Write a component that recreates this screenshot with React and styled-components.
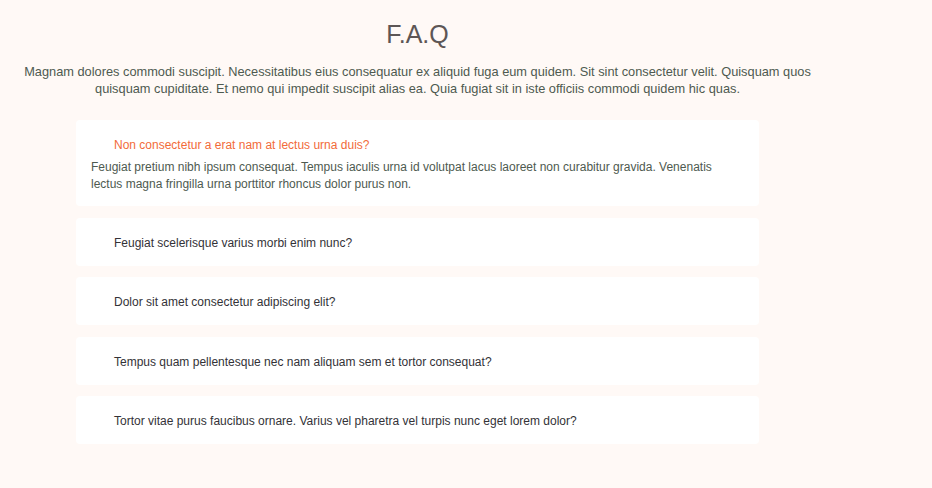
import React, { useState } from 'react';
import styled, { createGlobalStyle } from 'styled-components';

const GlobalStyle = createGlobalStyle`
  html, body {
    margin: 0;
    padding: 0;
    background: #fff9f6;
  }
  body {
    font-family: "Liberation Sans", Arial, sans-serif;
  }
`;

const Section = styled.section`
  width: 835px;
  padding-top: 18px;
  text-align: center;
`;

const Title = styled.h2`
  margin: 0;
  font-size: 25px;
  font-weight: 400;
  line-height: 32px;
  color: #5d5655;
`;

const Intro = styled.p`
  margin: 13px 0 0;
  padding: 0 20px;
  font-size: 12.8px;
  line-height: 17px;
  color: #4e5a50;
`;

const List = styled.ul`
  list-style: none;
  margin: 23px 76px 0;
  padding: 0;
  display: flex;
  flex-direction: column;
  gap: 11.5px;
  text-align: left;
`;

const Item = styled.li`
  background: #fff;
  border-radius: 4px;
  padding: 16px 15px 14px;
`;

const Question = styled.a`
  display: block;
  padding-left: 23px;
  font-size: 12px;
  line-height: 18px;
  color: ${p => (p.$open ? '#f26b3a' : '#333237')};
  cursor: pointer;
  text-decoration: none;
`;

const Answer = styled.p`
  margin: 5px 0 -1px;
  font-size: 12px;
  line-height: 17px;
  color: #4e5a50;
`;

const faqs = [
  {
    q: 'Non consectetur a erat nam at lectus urna duis?',
    a: 'Feugiat pretium nibh ipsum consequat. Tempus iaculis urna id volutpat lacus laoreet non curabitur gravida. Venenatis lectus magna fringilla urna porttitor rhoncus dolor purus non.',
  },
  {
    q: 'Feugiat scelerisque varius morbi enim nunc?',
    a: 'Dolor sit amet consectetur adipiscing elit pellentesque habitant morbi.',
  },
  {
    q: 'Dolor sit amet consectetur adipiscing elit?',
    a: 'Eleifend mi in nulla posuere sollicitudin aliquam ultrices sagittis orci.',
  },
  {
    q: 'Tempus quam pellentesque nec nam aliquam sem et tortor consequat?',
    a: 'Molestie a iaculis at erat pellentesque adipiscing commodo.',
  },
  {
    q: 'Tortor vitae purus faucibus ornare. Varius vel pharetra vel turpis nunc eget lorem dolor?',
    a: 'Laoreet sit amet cursus sit amet dictum sit amet justo.',
  },
];

export default function App() {
  const [open, setOpen] = useState(0);

  return (
    <>
      <GlobalStyle />
      <Section>
        <Title>F.A.Q</Title>
        <Intro>
          Magnam dolores commodi suscipit. Necessitatibus eius consequatur ex aliquid fuga eum quidem. Sit sint consectetur velit. Quisquam quos quisquam cupiditate. Et nemo qui impedit suscipit alias ea. Quia fugiat sit in iste officiis commodi quidem hic quas.
        </Intro>
        <List>
          {faqs.map((f, i) => (
            <Item key={i}>
              <Question $open={open === i} onClick={() => setOpen(open === i ? -1 : i)}>
                {f.q}
              </Question>
              {open === i && <Answer>{f.a}</Answer>}
            </Item>
          ))}
        </List>
      </Section>
    </>
  );
}
